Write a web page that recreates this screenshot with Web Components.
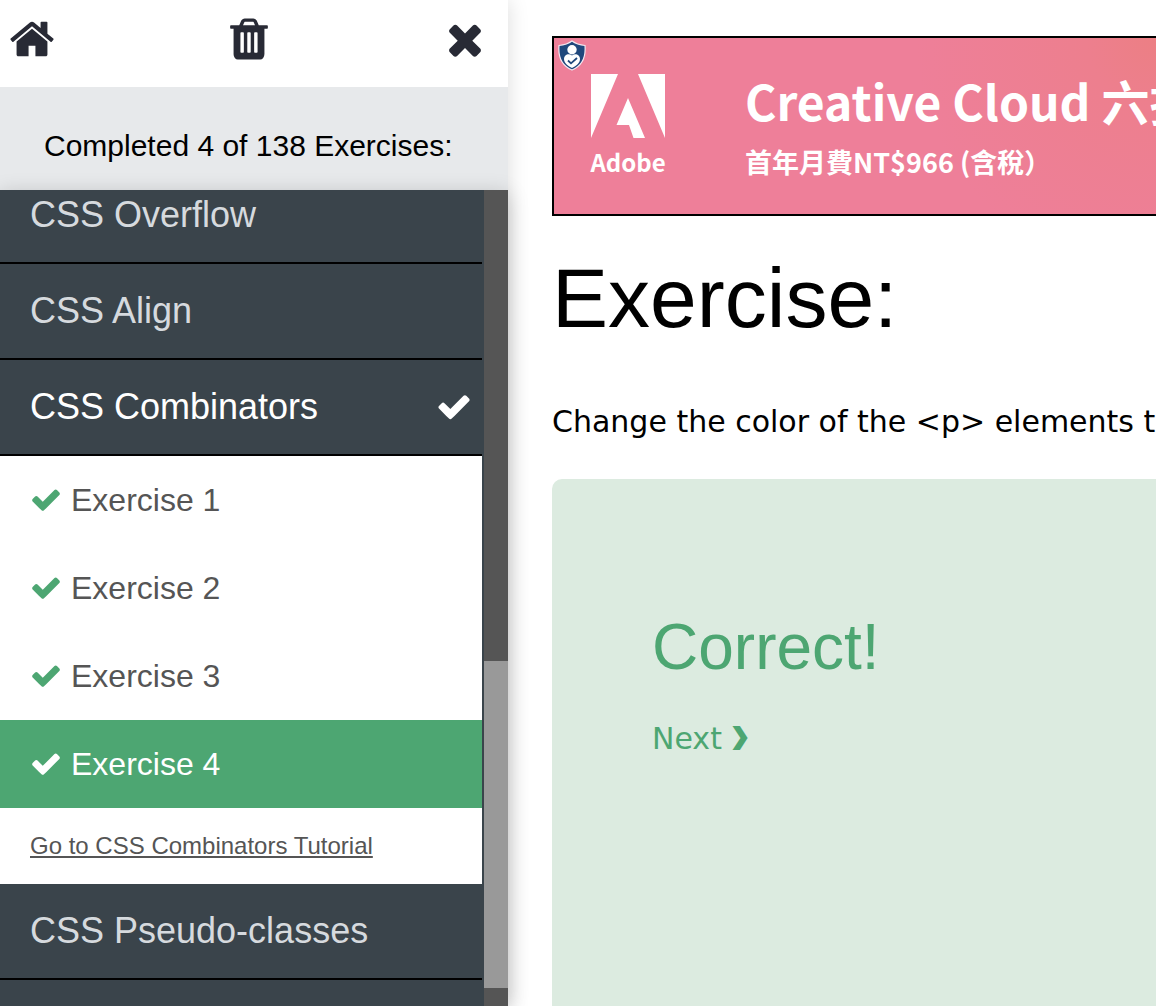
<!DOCTYPE html>
<html lang="en">
<head>
<meta charset="utf-8">
<title>CSS Exercises</title>
<style>
  html, body { height: 100%; margin: 0; }
  body { background: #fff; color: #000; font-family: "Liberation Sans", Arial, sans-serif; overflow: hidden; }
</style>
</head>
<body>
<exercise-app>
  <exercise-sidebar slot="sidebar" completed="4" total="138">
    <topic-row label="CSS Overflow"></topic-row>
    <topic-row label="CSS Align"></topic-row>
    <topic-row label="CSS Combinators" done></topic-row>
    <exercise-link>Exercise 1</exercise-link>
    <exercise-link>Exercise 2</exercise-link>
    <exercise-link>Exercise 3</exercise-link>
    <exercise-link current>Exercise 4</exercise-link>
    <tutorial-link>Go to CSS Combinators Tutorial</tutorial-link>
    <topic-row label="CSS Pseudo-classes"></topic-row>
    <topic-row label=""></topic-row>
  </exercise-sidebar>
  <ad-banner></ad-banner>
  <exercise-task heading="Exercise:">Change the color of the &lt;p&gt; elements t</exercise-task>
  <result-panel heading="Correct!"></result-panel>
</exercise-app>

<script>
const ICONS = {
  home: ['0 0 1792 1792', 'M1472 992v480q0 26-19 45t-45 19h-384v-384h-256v384h-384q-26 0-45-19t-19-45v-480q0-1 .5-3t.5-3l575-474 575 474q1 2 1 6zm223-69l-62 74q-8 9-21 11h-3q-13 0-21-7l-692-577-692 577q-12 8-24 7-13-2-21-11l-62-74q-8-10-7-23.5t11-21.5l719-599q32-26 76-26t76 26l244 204v-195q0-14 9-23t23-9h192q14 0 23 9t9 23v408l219 182q10 8 11 21.5t-7 23.5z'],
  trash: ['0 0 1792 1792', 'M704 1376v-704q0-14-9-23t-23-9h-64q-14 0-23 9t-9 23v704q0 14 9 23t23 9h64q14 0 23-9t9-23zm256 0v-704q0-14-9-23t-23-9h-64q-14 0-23 9t-9 23v704q0 14 9 23t23 9h64q14 0 23-9t9-23zm256 0v-704q0-14-9-23t-23-9h-64q-14 0-23 9t-9 23v704q0 14 9 23t23 9h64q14 0 23-9t9-23zm-544-992h448l-48-117q-7-9-17-11h-317q-10 2-17 11zm928 32v64q0 14-9 23t-23 9h-96v948q0 83-47 143.5t-113 60.5h-832q-66 0-113-58.5t-47-141.5v-952h-96q-14 0-23-9t-9-23v-64q0-14 9-23t23-9h309l70-167q15-37 54-63t79-26h320q40 0 79 26t54 63l70 167h309q14 0 23 9t9 23z'],
  close: ['0 0 1792 1792', 'M1490 1322q0 40-28 68l-136 136q-28 28-68 28t-68-28l-294-294-294 294q-28 28-68 28t-68-28l-136-136q-28-28-28-68t28-68l294-294-294-294q-28-28-28-68t28-68l136-136q28-28 68-28t68 28l294 294 294-294q28-28 68-28t68 28l136 136q28 28 28 68t-28 68l-294 294 294 294q28 28 28 68z'],
  check: ['0 20 1792 1792', 'M1671 566q0 40-28 68l-724 724-136 136q-28 28-68 28t-68-28l-136-136-362-362q-28-28-28-68t28-68l136-136q28-28 68-28t68 28l294 295 656-657q28-28 68-28t68 28l136 136q28 28 28 68z']
};

class BaseElement extends HTMLElement {
  connectedCallback() {
    if (this.shadowRoot) return;
    this.attachShadow({ mode: 'open' }).innerHTML = this.render();
  }
}

class GlyphIcon extends BaseElement {
  render() {
    const [box, path] = ICONS[this.getAttribute('name')];
    return `<style>
      :host { display: block; width: 48px; height: 48px; flex: none; }
      svg { display: block; width: 100%; height: 100%; fill: currentColor; }
    </style><svg viewBox="${box}" aria-hidden="true"><path d="${path}"/></svg>`;
  }
}

class TopicRow extends BaseElement {
  render() {
    const done = this.hasAttribute('done');
    return `<style>
      :host { display: block; border-bottom: 2px solid #000; }
      button { display: flex; align-items: center; justify-content: space-between; width: 100%; height: 94px;
        padding: 0 10px 0 30px; border: 0; background: none; color: ${done ? '#fff' : '#d6dade'};
        font: 36px/44px "Liberation Sans", Arial, sans-serif; text-align: left; cursor: pointer; }
      glyph-icon { width: 36px; height: 36px; }
    </style><button type="button"><span>${this.getAttribute('label')}</span>${done ? '<glyph-icon name="check"></glyph-icon>' : ''}</button>`;
  }
}

class ExerciseLink extends BaseElement {
  render() {
    return `<style>
      :host { display: block; background: #fff; color: #555; }
      :host([current]) { background: #4da672; color: #fff; }
      a { display: flex; align-items: center; gap: 9px; height: 88px; padding: 0 30px; color: inherit;
        font-size: 32px; line-height: 40px; text-decoration: none; }
      glyph-icon { width: 32px; height: 32px; color: #4da672; }
      :host([current]) glyph-icon { color: #fff; }
    </style><a href="#"><glyph-icon name="check"></glyph-icon><slot></slot></a>`;
  }
}

class TutorialLink extends BaseElement {
  render() {
    return `<style>
      :host { display: flex; align-items: center; height: 76px; padding: 0 30px; background: #fff; }
      a { color: #555; font-size: 24px; line-height: 32px; }
    </style><a href="#"><slot></slot></a>`;
  }
}

class ExerciseSidebar extends BaseElement {
  render() {
    return `<style>
      :host { display: flex; flex-direction: column; min-height: 0; background: #e7e9eb;
        box-shadow: 0 0 20px rgba(0,0,0,.14); }
      header { display: flex; justify-content: space-between; padding: 15px 19px 24px 8px; background: #fff; color: #282a35; }
      header a, header button { display: block; padding: 0; border: 0; background: none; color: inherit; cursor: pointer; }
      p { margin: 0; padding: 39px 10px 24px 44px; font-size: 30px; line-height: 40px; white-space: nowrap; }
      .body { display: flex; flex: 1; min-height: 0; background: #3a444b; position: relative;
        box-shadow: 0 4px 20px rgba(0,0,0,.2); }
      nav { flex: 1; min-width: 0; overflow: hidden; padding-right: 2px; }
      .track { display: flex; flex-direction: column; justify-content: flex-end; flex: none; width: 24px;
        box-sizing: border-box; padding-bottom: 18px; background: #555; }
      .thumb { height: 41%; background: #999; }
    </style>
    <header>
      <a href="#" aria-label="Home"><glyph-icon name="home"></glyph-icon></a>
      <button type="button" aria-label="Reset"><glyph-icon name="trash"></glyph-icon></button>
      <button type="button" aria-label="Close"><glyph-icon name="close"></glyph-icon></button>
    </header>
    <p>Completed ${this.getAttribute('completed')} of ${this.getAttribute('total')} Exercises:</p>
    <div class="body"><nav><slot></slot></nav><div class="track"><div class="thumb"></div></div></div>`;
  }
  scrollList(offset) { this.shadowRoot.querySelector('nav').scrollTop = offset; }
}

class AdBanner extends BaseElement {
  render() {
    return `<style>
      :host { display: block; }
      .ad { position: relative; display: flex; box-sizing: border-box; height: 180px; border: 2px solid #000; border-right: 0;
        padding: 36px 0 0 37px; gap: 80px; color: #fff; text-decoration: none; white-space: nowrap; overflow: hidden;
        background: radial-gradient(circle at 100% 0, #ec7f84 0, #ed7f8e 70px, #ee7f99 240px);
        font-family: "Noto Sans CJK TC", "Noto Sans", sans-serif; font-weight: 700; }
      .shield { position: absolute; left: 4px; top: 2px; width: 28px; height: 31px; }
      .brand { display: flex; flex-direction: column; align-items: center; width: 74px; flex: none; }
      .brand svg { width: 74px; height: 64px; }
      .brand span { font-size: 24px; line-height: 48px; }
      .copy { display: flex; flex-direction: column; gap: 18px; }
      .title { font-size: 48px; line-height: 52px; }
      .sub { font-size: 27px; line-height: 36px; }
    </style>
    <a class="ad" href="#">
      <svg class="shield" viewBox="0 0 28 31" aria-hidden="true">
        <path d="M14 1C18 4 22 5 27 5.500C28 17 24 26 14 30C4 26 0 17 1 5.500C6 5 10 4 14 1Z" fill="#20487c" stroke="#f3e7f0" stroke-width="1.200"/>
        <circle cx="14" cy="9.800" r="4.700" fill="#fff"/>
        <path d="M14 15.500C17 13 22 14.500 22 19C22 23 17.500 26.500 14 28C10.500 26.500 6 23 6 19C6 14.500 11 13 14 15.500Z" fill="#fff"/>
        <path d="M10 20.500L13 23.300L19 18" fill="none" stroke="#20487c" stroke-width="1.800"/>
      </svg>
      <div class="brand">
        <svg viewBox="0 0 74 64" fill="#fff" aria-hidden="true"><path d="M0 0H27L0 64ZM47 0H74V64ZM37 24L54 64H42.500L38 51H25.500Z"/></svg>
        <span>Adobe</span>
      </div>
      <div class="copy"><span class="title">Creative Cloud 六折</span><span class="sub">首年月費NT$966 (含稅）</span></div>
    </a>`;
  }
}

class ExerciseTask extends BaseElement {
  render() {
    return `<style>
      :host { display: block; white-space: nowrap; }
      h1 { margin: 0; font-size: 84px; line-height: 100px; font-weight: 400; }
      p { margin: 0; padding-top: 50px; font: 30px/48px Verdana, "DejaVu Sans", sans-serif; }
    </style><h1>${this.getAttribute('heading')}</h1><p><slot></slot></p>`;
  }
}

class ResultPanel extends BaseElement {
  render() {
    return `<style>
      :host { display: block; box-sizing: border-box; flex: 1; padding: 120px 100px; border-top-left-radius: 10px;
        background: #dcebe0; color: #4da672; }
      h2 { margin: 0; font-size: 64px; line-height: 96px; font-weight: 400; }
      a { display: flex; align-items: center; gap: 9px; padding-top: 20px; color: inherit; text-decoration: none;
        font: 30px/48px Verdana, "DejaVu Sans", sans-serif; }
      b { font-size: 22px; line-height: 44px; padding-bottom: 4px; -webkit-text-stroke: 2px currentColor; }
    </style><h2>${this.getAttribute('heading')}</h2><a href="#">Next <b>❯</b></a>`;
  }
}

class ExerciseApp extends BaseElement {
  render() {
    return `<style>
      :host { display: grid; grid-template-columns: 508px minmax(0, 1fr); height: 100vh; }
      ::slotted([slot=sidebar]) { z-index: 1; }
      main { display: flex; flex-direction: column; min-width: 0; padding: 36px 0 0 44px; overflow: hidden; }
      ::slotted(exercise-task) { padding: 32px 0 33px; }
    </style><slot name="sidebar"></slot><main><slot></slot></main>`;
  }
}

customElements.define('glyph-icon', GlyphIcon);
customElements.define('topic-row', TopicRow);
customElements.define('exercise-link', ExerciseLink);
customElements.define('tutorial-link', TutorialLink);
customElements.define('ad-banner', AdBanner);
customElements.define('exercise-task', ExerciseTask);
customElements.define('result-panel', ResultPanel);
customElements.define('exercise-sidebar', ExerciseSidebar);
customElements.define('exercise-app', ExerciseApp);

document.querySelector('exercise-sidebar').scrollList(22);
</script>
</body>
</html>
